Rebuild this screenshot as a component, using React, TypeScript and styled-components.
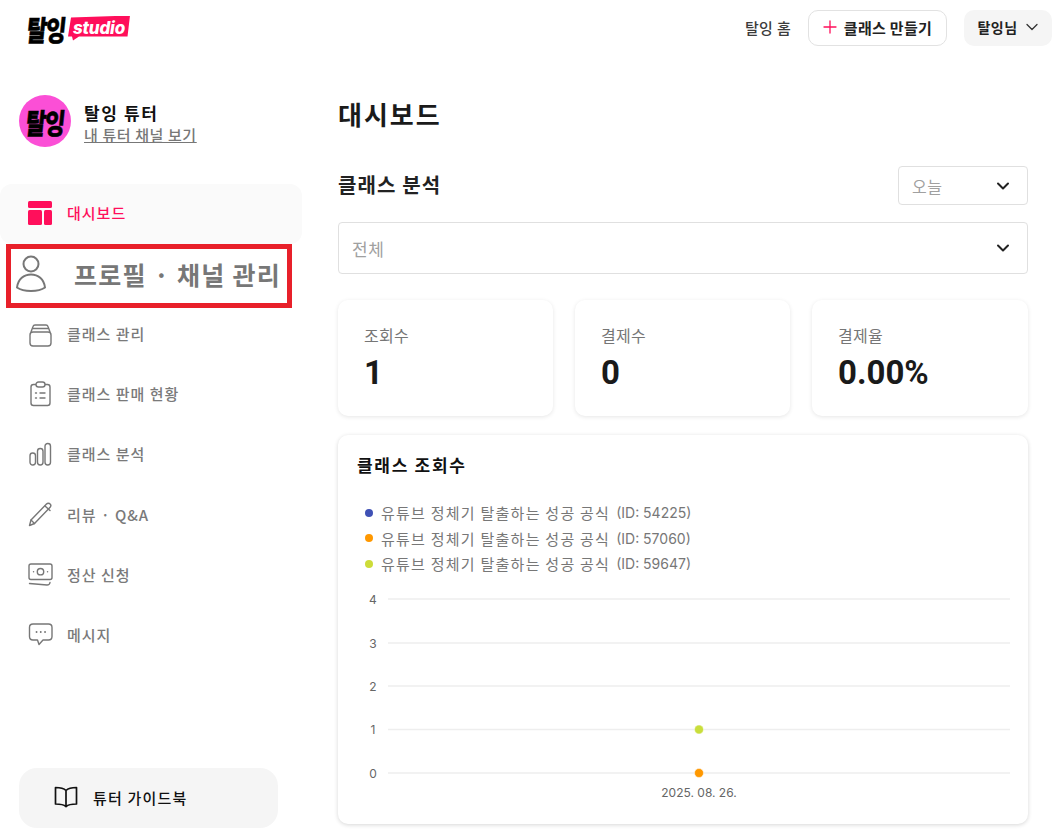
import React from "react";
import styled, { createGlobalStyle } from "styled-components";

const FONT = `Inter, "Noto Sans CJK KR", "Noto Sans", sans-serif`;
const KFONT = `"Noto Sans CJK KR", Inter, sans-serif`;

const Global = createGlobalStyle`
  html, body { margin: 0; padding: 0; background: #fff; }
  body { font-family: ${FONT}; color: #1a1a1a; overflow: hidden; }
  * { box-sizing: border-box; }
`;

const Page = styled.div`
  width: 1058px;
  height: 834px;
  display: flex;
  flex-direction: column;
  overflow: hidden;
`;

const Header = styled.header`
  height: 56px;
  flex: none;
  display: flex;
  align-items: center;
  justify-content: space-between;
  padding: 0 6px 0 27px;
`;

const Logo = styled.div`
  display: flex;
  align-items: center;
  gap: 3px;
`;

const LogoWord = styled.span`
  font-family: ${KFONT};
  font-weight: 900;
  font-size: 27px;
  line-height: 1;
  letter-spacing: -1.5px;
  color: #000;
  width: 38px;
  white-space: nowrap;
  display: inline-block;
  transform-origin: left center;
  transform: skewX(-6deg) scale(0.82, 1.05);
  -webkit-text-stroke: 0.5px #000;
`;

const LogoTag = styled.span`
  width: 62px;
  height: 25px;
  background: #ff0f5b;
  color: #fff;
  font-family: Inter, sans-serif;
  font-weight: 800;
  font-style: italic;
  font-size: 17px;
  line-height: 24px;
  text-align: center;
  letter-spacing: -0.2px;
  clip-path: polygon(3px 2px, 100% 0, 96% 21px, 11px 21px, 5px 25px, 4px 21px, 0 21px);
`;

const HeaderActions = styled.div`
  display: flex;
  align-items: center;
`;

const HomeLink = styled.span`
  font-family: ${KFONT};
  font-size: 15px;
  font-weight: 500;
  letter-spacing: 0.3px;
  color: #3c3c3c;
  margin-right: 17px;
  padding-bottom: 2px;
`;

const CreateButton = styled.button`
  width: 139px;
  height: 36px;
  margin-right: 17px;
  border: 1px solid #e2e2e2;
  border-radius: 10px;
  background: #fff;
  display: flex;
  align-items: center;
  justify-content: center;
  gap: 7px;
  font-family: ${KFONT};
  font-size: 15px;
  font-weight: 600;
  letter-spacing: 0.3px;
  color: #222;
  padding: 0 0 2px;
`;

const UserButton = styled.button`
  width: 88px;
  height: 36px;
  border: 0;
  border-radius: 10px;
  background: #f5f5f5;
  display: flex;
  align-items: center;
  justify-content: center;
  gap: 7px;
  font-family: ${KFONT};
  font-size: 14px;
  font-weight: 600;
  letter-spacing: 0.5px;
  color: #222;
  padding: 0 0 2px;
`;

const Body = styled.div`
  flex: 1;
  display: flex;
  min-height: 0;
`;

const Sidebar = styled.aside`
  width: 302px;
  flex: none;
  display: flex;
  flex-direction: column;
  padding-top: 39px;
`;

const Profile = styled.div`
  display: flex;
  align-items: center;
  gap: 13px;
  padding-left: 19px;
  height: 52px;
`;

const Avatar = styled.div`
  width: 52px;
  height: 52px;
  border-radius: 50%;
  background: #fb4fd6;
  display: flex;
  align-items: center;
  justify-content: center;
`;

const ProfileText = styled.div`
  display: flex;
  flex-direction: column;
  padding-top: 6px;
`;

const ProfileName = styled.div`
  font-family: ${KFONT};
  font-size: 17px;
  font-weight: 600;
  line-height: 22px;
  letter-spacing: 1.6px;
  color: #111;
`;

const ProfileLink = styled.a`
  font-family: ${KFONT};
  font-size: 15px;
  font-weight: 500;
  line-height: 22px;
  letter-spacing: 0.6px;
  color: #777;
  text-decoration: underline;
`;

const Nav = styled.nav`
  display: flex;
  flex-direction: column;
  margin-top: 37px;
`;

const NavItem = styled.div<{ $active?: boolean }>`
  height: 60.15px;
  display: flex;
  align-items: center;
  gap: 14px;
  padding: 0 0 3px 27px;
  border-radius: 12px;
  font-family: ${KFONT};
  font-size: 15px;
  font-weight: 500;
  letter-spacing: 1px;
  color: ${(p) => (p.$active ? "#ff0f5b" : "#7a7a7a")};
  background: ${(p) => (p.$active ? "#fafafa" : "transparent")};
`;

const HighlightItem = styled.div`
  width: 286px;
  height: 64px;
  margin: 0 0 -3px 6px;
  border: 5px solid #e8202a;
  display: flex;
  align-items: center;
  padding: 0 0 4px 4px;
  gap: 27px;
  font-family: ${KFONT};
  font-size: 25px;
  font-weight: 700;
  letter-spacing: 1.3px;
  color: #777;
  white-space: nowrap;
`;

const NavIcon = styled.svg`
  width: 26px;
  height: 26px;
  flex: none;
`;

const GuideButton = styled.div`
  width: 259px;
  height: 60px;
  margin: auto 0 6px 19px;
  border-radius: 18px;
  background: #f5f5f5;
  display: flex;
  align-items: center;
  gap: 15px;
  padding: 0 0 2px 35px;
  font-family: ${KFONT};
  font-size: 15px;
  font-weight: 500;
  letter-spacing: 1.200px;
  color: #111;
`;

const Main = styled.main`
  width: 690px;
  margin-left: 36px;
  flex: none;
  display: flex;
  flex-direction: column;
`;

const PageTitle = styled.h1`
  margin: 40px 0 0;
  font-family: ${KFONT};
  font-size: 26px;
  font-weight: 700;
  line-height: 36px;
  letter-spacing: 2px;
  color: #1a1a1a;
`;

const SectionRow = styled.div`
  display: flex;
  align-items: center;
  justify-content: space-between;
  margin-top: 34px;
`;

const SectionTitle = styled.h2`
  margin: 0;
  font-family: ${KFONT};
  font-size: 20px;
  font-weight: 700;
  letter-spacing: 1.1px;
  padding-bottom: 2px;
  color: #222;
`;

const Select = styled.div<{ $width: string; $height: number; $size: number }>`
  width: ${(p) => p.$width};
  height: ${(p) => p.$height}px;
  border: 1px solid #e0e0e0;
  border-radius: 4px;
  background: #fff;
  display: flex;
  align-items: center;
  justify-content: space-between;
  padding: 0 17px 0 13px;
  font-family: ${KFONT};
  font-size: ${(p) => p.$size}px;
  letter-spacing: 0.6px;
  color: #a0a0a0;
`;

const FullSelect = styled(Select)`
  margin-top: 17px;
`;

const Stats = styled.div`
  display: grid;
  grid-template-columns: 215px 215px 216px;
  column-gap: 22px;
  margin-top: 26px;
`;

const StatCard = styled.div`
  height: 116px;
  background: #fff;
  border-radius: 10px;
  box-shadow: 0 1px 4px rgba(0, 0, 0, 0.1);
  padding: 24px 26px 0;
`;

const StatLabel = styled.div`
  font-family: ${KFONT};
  font-size: 16px;
  line-height: 22px;
  letter-spacing: 0.3px;
  color: #767676;
`;

const StatValue = styled.div`
  font-family: Roboto, sans-serif;
  font-size: 33px;
  font-weight: 700;
  line-height: 38px;
  margin-top: 8px;
  color: #1a1a1a;
`;

const ChartCard = styled.section`
  height: 389px;
  margin-top: 19px;
  background: #fff;
  border-radius: 10px;
  box-shadow: 0 1px 4px rgba(0, 0, 0, 0.16);
  padding: 18px 19px 0;
  display: flex;
  flex-direction: column;
`;

const ChartTitle = styled.h3`
  margin: 0;
  font-family: ${KFONT};
  font-size: 17px;
  font-weight: 600;
  line-height: 24px;
  letter-spacing: 1.7px;
  color: #111;
`;

const Legend = styled.ul`
  list-style: none;
  margin: 23px 0 0;
  padding: 0 0 0 8px;
  display: flex;
  flex-direction: column;
`;

const LegendItem = styled.li`
  height: 25.5px;
  display: flex;
  align-items: center;
  gap: 8px;
  color: #777;
`;

const LegendLabel = styled.span`
  display: flex;
  align-items: center;
`;

const LegendName = styled.span`
  font-family: ${KFONT};
  font-size: 15px;
  letter-spacing: 1.25px;
  white-space: pre;
`;

const LegendId = styled.span`
  font-family: Inter, sans-serif;
  font-size: 14px;
  margin-left: 6px;
`;

const Dot = styled.span<{ $color: string }>`
  width: 8px;
  height: 8px;
  border-radius: 50%;
  background: ${(p) => p.$color};
`;

const Chart = styled.svg`
  display: block;
  width: 672px;
  height: 226px;
  margin: 8px 0 0 -19px;
`;

const Chevron = ({ size = 14, w = 2, color = "#222" }: { size?: number; w?: number; color?: string }) => (
  <svg width={size} height={size} viewBox="0 0 14 14" fill="none">
    <path d="M2 4.500 7 9.500 12 4.500" stroke={color} strokeWidth={w} strokeLinecap="round" strokeLinejoin="round" />
  </svg>
);

const stroke = { fill: "none", stroke: "#777", strokeWidth: 1.4, strokeLinecap: "round", strokeLinejoin: "round" } as const;

const ClassIcon = () => (
  <NavIcon viewBox="0 0 26 26">
    <g {...stroke}>
      <rect x="3" y="11" width="21" height="14" rx="3" />
      <path d="M4 11 6 5.500C6.300 4.600 7 4 8 4h11c1 0 1.700.6 2 1.500L23 11" />
      <path d="M6 7.500h15" />
    </g>
  </NavIcon>
);

const ClipboardIcon = () => (
  <NavIcon viewBox="0 0 26 26">
    <g {...stroke}>
      <rect x="4" y="3.500" width="19" height="21" rx="2.500" />
      <rect x="9" y="1" width="9" height="5" rx="2.500" fill="#fff" />
      <path d="M8.500 12h1M13 12h5M8.500 17h1M13 17h5" />
    </g>
  </NavIcon>
);

const BarsIcon = () => (
  <NavIcon viewBox="0 0 26 26">
    <g {...stroke}>
      <rect x="3" y="12" width="5.500" height="12" rx="2.700" />
      <rect x="10.500" y="7.500" width="5.500" height="16.500" rx="2.700" />
      <rect x="18" y="2.500" width="5.500" height="21.500" rx="2.700" />
    </g>
  </NavIcon>
);

const PencilIcon = () => (
  <NavIcon viewBox="0 0 26 26">
    <g {...stroke}>
      <path d="M2.500 24.500 4 19 19.500 3c1-1 2.800-1 3.600 0 .9.900.9 2.300 0 3.300L7.500 22.500Z" />
      <path d="M18 5l5 4.500M4 19l3.500 3.500" />
    </g>
  </NavIcon>
);

const MoneyIcon = () => (
  <NavIcon viewBox="0 0 26 26">
    <g {...stroke}>
      <rect x="2" y="3" width="23" height="15.500" rx="2" />
      <circle cx="13.500" cy="10.700" r="3.200" />
      <path d="M6.500 10.700h.1M20.500 10.700h.1" />
      <path d="M2.500 22.500 20 24c1.500 0 2.800-.5 3-2.500" />
    </g>
  </NavIcon>
);

const ChatIcon = () => (
  <NavIcon viewBox="0 0 26 26">
    <g {...stroke}>
      <path d="M6 3h15.500c2 0 3.500 1.500 3.500 3.500v9c0 2-1.500 3.500-3.500 3.500H16l-4 4.500-1.500-4.500H6c-2 0-3.500-1.500-3.500-3.500v-9C2.500 4.500 4 3 6 3Z" />
      <path d="M9.500 11h.1M13.700 11h.1M18 11h.1" strokeWidth={1.800} />
    </g>
  </NavIcon>
);

const gridY = [14, 58, 101, 144.500, 188];
const labels = ["4", "3", "2", "1", "0"];
const legend = [
  { color: "#3f51b5", id: "54225" },
  { color: "#ff9800", id: "57060" },
  { color: "#cddc39", id: "59647" },
];

export default function App() {
  return (
    <Page>
      <Global />
      <Header>
        <Logo>
          <LogoWord>탈잉</LogoWord>
          <LogoTag>studio</LogoTag>
        </Logo>
        <HeaderActions>
          <HomeLink>탈잉 홈</HomeLink>
          <CreateButton>
            <svg width="14" height="14" viewBox="0 0 14 14" fill="none">
              <path d="M7 1v12M1 7h12" stroke="#ff0f5b" strokeWidth="1.300" strokeLinecap="round" />
            </svg>
            클래스 만들기
          </CreateButton>
          <UserButton>
            탈잉님
            <Chevron size={14} w={1.300} color="#333" />
          </UserButton>
        </HeaderActions>
      </Header>
      <Body>
        <Sidebar>
          <Profile>
            <Avatar>
              <LogoWord>탈잉</LogoWord>
            </Avatar>
            <ProfileText>
              <ProfileName>탈잉 튜터</ProfileName>
              <ProfileLink>내 튜터 채널 보기</ProfileLink>
            </ProfileText>
          </Profile>
          <Nav>
            <NavItem $active>
              <NavIcon viewBox="0 0 26 26">
                <rect x="1" y="1" width="24" height="7" rx="1.500" fill="#ff0f5b" />
                <rect x="1" y="10" width="14" height="15" rx="1.500" fill="#ff0f5b" />
                <rect x="17" y="10" width="8" height="15" rx="1.500" fill="#ff0f5b" />
              </NavIcon>
              대시보드
            </NavItem>
            <HighlightItem>
              <svg width="32" height="38" viewBox="0 0 32 38" fill="none" stroke="#777" strokeWidth="2">
                <circle cx="16" cy="9" r="7.500" />
                <path d="M2 32.500C3 24 9 19.500 16 19.500S29 24 30 32.500c-3.500 2.500-8.500 3.500-14 3.500S5.500 35 2 32.500Z" strokeLinejoin="round" />
              </svg>
              프로필 · 채널 관리
            </HighlightItem>
            <NavItem><ClassIcon />클래스 관리</NavItem>
            <NavItem><ClipboardIcon />클래스 판매 현황</NavItem>
            <NavItem><BarsIcon />클래스 분석</NavItem>
            <NavItem><PencilIcon />리뷰 · Q&amp;A</NavItem>
            <NavItem><MoneyIcon />정산 신청</NavItem>
            <NavItem><ChatIcon />메시지</NavItem>
          </Nav>
          <GuideButton>
            <svg width="24" height="22" viewBox="0 0 24 22" fill="none" stroke="#111" strokeWidth="1.700" strokeLinejoin="round" strokeLinecap="round">
              <path d="M12 4.500C10 2.500 6.500 1.500 1.500 1.500v16.500c5 0 8.500.8 10.500 2.500 2-1.700 5.500-2.500 10.500-2.500V1.500c-5 0-8.500 1-10.500 3ZM12 4.500v16" />
            </svg>
            튜터 가이드북
          </GuideButton>
        </Sidebar>
        <Main>
          <PageTitle>대시보드</PageTitle>
          <SectionRow>
            <SectionTitle>클래스 분석</SectionTitle>
            <Select $width="130px" $height={39} $size={16}>
              오늘
              <Chevron />
            </Select>
          </SectionRow>
          <FullSelect $width="100%" $height={52} $size={17}>
            전체
            <Chevron />
          </FullSelect>
          <Stats>
            <StatCard>
              <StatLabel>조회수</StatLabel>
              <StatValue>1</StatValue>
            </StatCard>
            <StatCard>
              <StatLabel>결제수</StatLabel>
              <StatValue>0</StatValue>
            </StatCard>
            <StatCard>
              <StatLabel>결제율</StatLabel>
              <StatValue>0.00%</StatValue>
            </StatCard>
          </Stats>
          <ChartCard>
            <ChartTitle>클래스 조회수</ChartTitle>
            <Legend>
              {legend.map((item) => (
                <LegendItem key={item.id}>
                  <Dot $color={item.color} />
                  <LegendLabel>
                    <LegendName>유튜브 정체기 탈출하는 성공 공식</LegendName>
                    <LegendId>(ID: {item.id})</LegendId>
                  </LegendLabel>
                </LegendItem>
              ))}
            </Legend>
            <Chart viewBox="0 0 672 226">
              {gridY.map((y, i) => (
                <React.Fragment key={y}>
                  <line x1="50" x2="672" y1={y} y2={y} stroke="#eeeeee" strokeWidth="1.300" />
                  <text x="35" y={y + 4.500} textAnchor="middle" fontSize="12" fontFamily="Inter, sans-serif" fill="#666">
                    {labels[i]}
                  </text>
                </React.Fragment>
              ))}
              <circle cx="361" cy="144.500" r="4.500" fill="#c9de3c" stroke="#fff" strokeWidth="0.500" />
              <circle cx="361" cy="188" r="4.500" fill="#ff9800" stroke="#fff" strokeWidth="0.500" />
              <text x="361" y="212" textAnchor="middle" fontSize="12" fontFamily="Inter, sans-serif" fill="#666">
                2025. 08. 26.
              </text>
            </Chart>
          </ChartCard>
        </Main>
      </Body>
    </Page>
  );
}
